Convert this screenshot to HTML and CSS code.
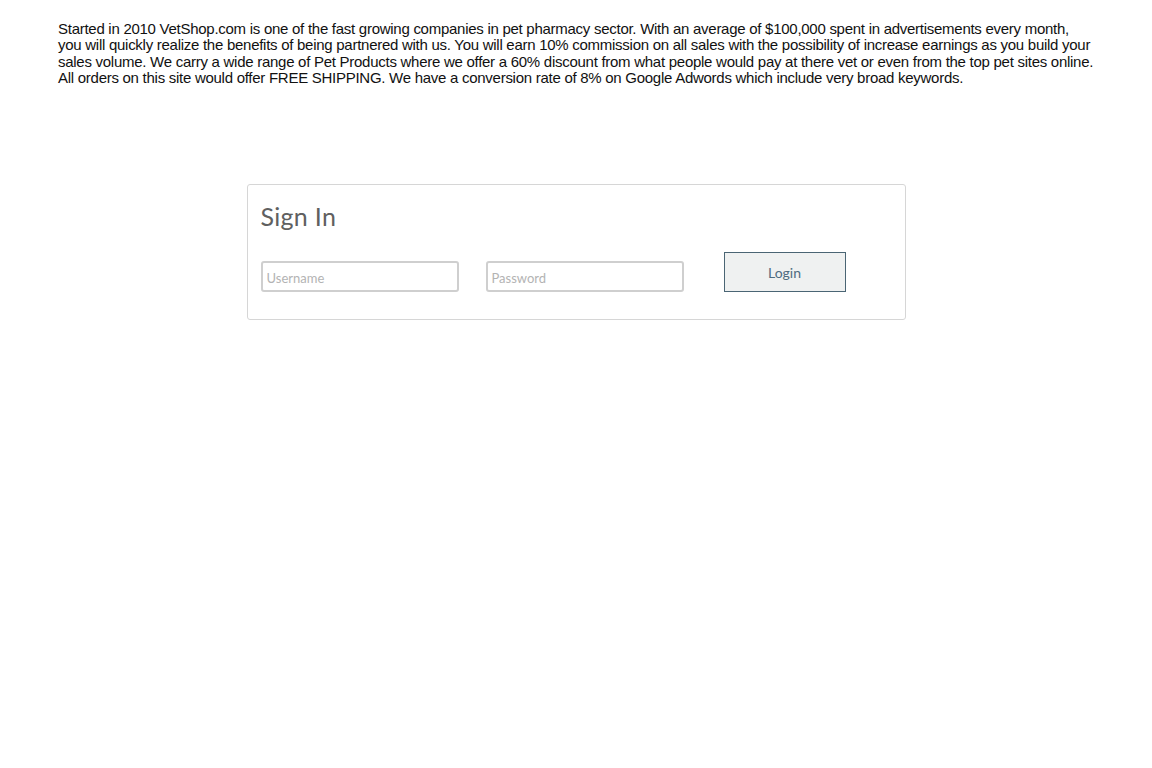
FILE: index.html
```html
<!DOCTYPE html>
<html>
<head>
<meta charset="utf-8">
<link rel="stylesheet" href="styles.css">
</head>
<body>
<p class="intro">Started in 2010 VetShop.com is one of the fast growing companies in pet pharmacy sector. With an average of $100,000 spent in advertisements every month,<br>you will quickly realize the benefits of being partnered with us. You will earn 10% commission on all sales with the possibility of increase earnings as you build your<br>sales volume. We carry a wide range of Pet Products where we offer a 60% discount from what people would pay at there vet or even from the top pet sites online.<br>All orders on this site would offer FREE SHIPPING. We have a conversion rate of 8% on Google Adwords which include very broad keywords.</p>
<div class="signin">
  <h2 class="title">Sign In</h2>
  <form class="row">
    <input class="field" type="text" placeholder="Username">
    <input class="field" type="password" placeholder="Password">
    <button class="btn" type="button">Login</button>
  </form>
</div>
</body>
</html>
```

FILE: styles.css
```css
html, body {
  margin: 0;
  padding: 0;
  background: #ffffff;
}
body {
  padding-top: 21px;
}
.intro {
  margin: 0 0 0 58px;
  width: 1080px;
  white-space: nowrap;
  font-family: "Liberation Sans", Arial, sans-serif;
  font-size: 15px;
  letter-spacing: -0.27px;
  line-height: 16.3px;
  color: #111;
}
.signin {
  box-sizing: border-box;
  width: 659px;
  height: 136px;
  margin: 98px auto 0;
  border: 1px solid #d6d6d6;
  border-radius: 3px;
  padding: 14px 13px 0;
  font-family: Lato, "Open Sans", sans-serif;
}
.title {
  margin: 0;
  font-weight: 400;
  font-size: 25px;
  line-height: 34px;
  color: #606060;
  letter-spacing: 0.3px;
}
.row {
  display: flex;
  align-items: flex-start;
  margin-top: 19px;
}
.field {
  box-sizing: border-box;
  width: 198px;
  height: 31px;
  margin-top: 9px;
  border: 2px solid #cfcfcf;
  border-radius: 3px;
  padding: 2px 4px 0;
  font-family: Lato, "Open Sans", sans-serif;
  font-size: 13px;
  color: #333;
  margin-right: 27px;
  outline: none;
}
.field::placeholder {
  color: #b3b3b3;
}
.field + .field {
  margin-right: 40px;
}
.btn {
  box-sizing: border-box;
  width: 122px;
  height: 40px;
  background: #eff1f1;
  border: 1px solid #4a6574;
  border-radius: 0;
  font-family: Lato, "Open Sans", sans-serif;
  font-size: 14px;
  color: #4e6b80;
}
```
